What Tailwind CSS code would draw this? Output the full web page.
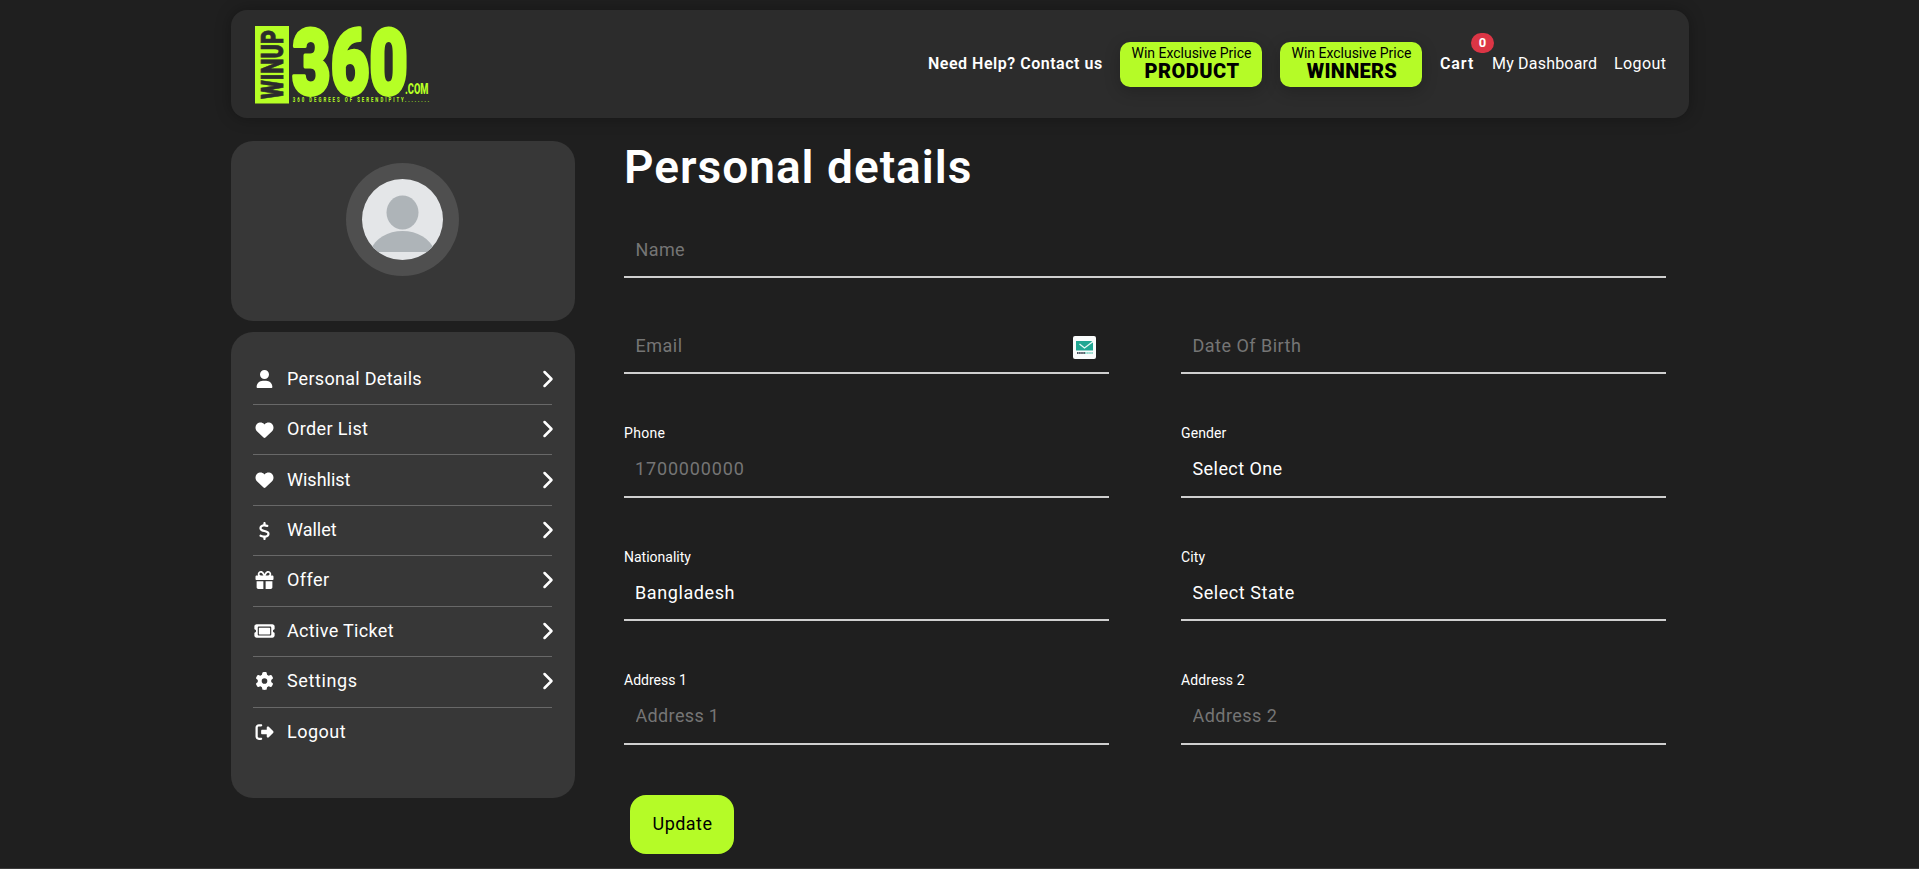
<!DOCTYPE html>
<html lang="en">
<head>
<meta charset="utf-8">
<title>Personal details</title>
<script src="https://cdn.jsdelivr.net/npm/@tailwindcss/browser@4"></script>
</head>
<body class="h-[869px] overflow-hidden bg-[#1f1f1f] font-['Roboto',sans-serif] text-white flex flex-col">
<div class="flex-1 w-[1458px] ml-[231px] pt-2.5">

  <header class="h-[108px] rounded-[16px] bg-[#2c2c2c] shadow-[0_0_16px_rgba(0,0,0,0.3)] pl-6 pr-[23px] flex items-center justify-between">
    <svg width="176" height="80" viewBox="0 0 176 80" class="shrink-0 overflow-visible">
      <rect x="0" y="2" width="34" height="77.500" fill="#b6ff25"/>
      <g font-family="Roboto, sans-serif" font-weight="900" fill="#b6ff25">
        <text transform="translate(27.500 75) rotate(-90)" font-size="31" textLength="69" lengthAdjust="spacingAndGlyphs" fill="#2c2c2c" stroke="#2c2c2c" stroke-width="0.700">WINUP</text>
        <text x="37" y="69.500" font-size="90" textLength="116" lengthAdjust="spacingAndGlyphs" stroke="#b6ff25" stroke-width="3.800" stroke-linejoin="round">360</text>
        <text x="150" y="70" font-size="14.500" textLength="23.500" lengthAdjust="spacingAndGlyphs">.COM</text>
        <g transform="scale(0.6 1)" font-size="7.200" font-weight="700">
          <text x="63" y="78.500" textLength="185" lengthAdjust="spacing">360 DEGREES OF SERENDIPITY</text>
          <text x="250" y="78.500" textLength="40" lengthAdjust="spacing">........</text>
        </g>
      </g>
    </svg>
    <nav class="flex items-center text-base leading-6">
      <a class="font-semibold tracking-[0.52px] w-[192px]">Need Help? Contact us</a>
      <a class="w-[142px] h-[45px] mr-[18px] rounded-[10px] bg-[#b5fb27] text-black shadow-[0_4px_16px_rgba(0,0,0,0.22)] flex flex-col items-center pt-[3px] pl-px">
        <span class="text-sm leading-4 tracking-[-0.02px] whitespace-nowrap">Win Exclusive Price</span>
        <span class="text-xl leading-5 font-black tracking-[0.5px] pl-px">PRODUCT</span>
      </a>
      <a class="w-[142px] h-[45px] mr-[18px] rounded-[10px] bg-[#b5fb27] text-black shadow-[0_4px_16px_rgba(0,0,0,0.22)] flex flex-col items-center pt-[3px] pl-px">
        <span class="text-sm leading-4 tracking-[-0.02px] whitespace-nowrap">Win Exclusive Price</span>
        <span class="text-xl leading-5 font-black tracking-[0.3px] pl-px">WINNERS</span>
      </a>
      <a class="relative w-[52px] font-semibold tracking-[0.9px]">Cart<span class="absolute left-[31px] top-[-19px] w-[23px] h-5 rounded-[10px] bg-[#dc3545] text-[13px] leading-5 font-bold text-center tracking-normal">0</span></a>
      <a class="w-[122px] tracking-[0.2px]">My Dashboard</a>
      <a class="w-[52px] tracking-[0.4px]">Logout</a>
    </nav>
  </header>

  <div class="flex mt-[23px]">
    <aside class="w-[344px] shrink-0 flex flex-col gap-[11px]">
      <div class="h-[180px] rounded-[22px] bg-[#373737] pt-[22px] pr-px flex justify-center">
        <div class="size-[113px] rounded-full bg-[#4f4f4f] p-4">
          <svg viewBox="0 0 81 81" class="size-[81px] rounded-full bg-[#e4e6e8]" fill="#aeb4b8">
            <ellipse cx="40.500" cy="33.500" rx="16" ry="17"/>
            <path d="M8 73V72C13 59 26 52 40.500 52S68 59 73 72V73Z"/>
          </svg>
        </div>
      </div>
      <nav class="h-[466px] rounded-[22px] bg-[#373737] px-[22px] pt-[22.5px] text-lg">
        <a class="flex items-center h-[50.45px] border-b border-[#686868] pb-px pr-[9px] w-[299px]"><svg class="w-[23px] h-[18px] mr-[11px] shrink-0" viewBox="0 0 448 512" fill="white"><path d="M224 256A128 128 0 1 0 224 0a128 128 0 1 0 0 256zm-45.700 48C79.800 304 0 383.800 0 482.300C0 498.700 13.300 512 29.700 512H418.300c16.400 0 29.700-13.300 29.700-29.700C448 383.800 368.200 304 269.700 304H178.300z"/></svg><span class="flex-1 whitespace-nowrap tracking-[0.3px]">Personal Details</span><svg class="w-3 h-[18px] shrink-0 -mr-[11px]" viewBox="0 0 12 18" fill="none" stroke="white" stroke-width="2.500" stroke-linecap="round" stroke-linejoin="round"><path d="M2.500 2l7 7-7 7"/></svg></a>
        <a class="flex items-center h-[50.45px] border-b border-[#686868] pb-px pr-[9px] w-[299px]"><svg class="w-[23px] h-[18px] mr-[11px] shrink-0 translate-y-px" viewBox="0 0 512 512" fill="white"><path d="M47.600 300.400L228.300 469.100c7.500 7 17.400 10.900 27.700 10.900s20.200-3.900 27.700-10.900L464.400 300.400c30.400-28.300 47.600-68 47.600-109.500v-5.800c0-69.900-50.500-129.500-119.400-141C347 36.500 300.600 51.400 268 84L256 96 244 84c-32.600-32.600-79-47.500-124.600-39.900C50.500 55.600 0 115.200 0 185.100v5.800c0 41.500 17.200 81.200 47.600 109.500z"/></svg><span class="flex-1 tracking-[0.35px]">Order List</span><svg class="w-3 h-[18px] shrink-0 -mr-[11px]" viewBox="0 0 12 18" fill="none" stroke="white" stroke-width="2.500" stroke-linecap="round" stroke-linejoin="round"><path d="M2.500 2l7 7-7 7"/></svg></a>
        <a class="flex items-center h-[50.45px] border-b border-[#686868] pb-px pr-[9px] w-[299px]"><svg class="w-[23px] h-[18px] mr-[11px] shrink-0" viewBox="0 0 512 512" fill="white"><path d="M47.600 300.400L228.300 469.100c7.500 7 17.400 10.900 27.700 10.900s20.200-3.900 27.700-10.900L464.400 300.400c30.400-28.300 47.600-68 47.600-109.500v-5.800c0-69.900-50.500-129.500-119.400-141C347 36.500 300.600 51.400 268 84L256 96 244 84c-32.600-32.600-79-47.500-124.600-39.900C50.500 55.600 0 115.200 0 185.100v5.800c0 41.500 17.200 81.200 47.600 109.500z"/></svg><span class="flex-1">Wishlist</span><svg class="w-3 h-[18px] shrink-0 -mr-[11px]" viewBox="0 0 12 18" fill="none" stroke="white" stroke-width="2.500" stroke-linecap="round" stroke-linejoin="round"><path d="M2.500 2l7 7-7 7"/></svg></a>
        <a class="flex items-center h-[50.45px] border-b border-[#686868] pb-px pr-[9px] w-[299px]"><svg class="w-[23px] h-[18px] mr-[11px] shrink-0 translate-y-px" viewBox="0 0 320 512" fill="white"><path d="M160 0c17.700 0 32 14.300 32 32V67.700c1.600 .2 3.100 .4 4.700 .7c.4 .1 .7 .1 1.100 .2l48 8.800c17.400 3.200 28.900 19.900 25.700 37.200s-19.900 28.900-37.200 25.700l-47.500-8.700c-31.300-4.600-58.900-1.500-78.300 6.200s-27.200 18.300-29 28.100c-2 10.700-.5 16.700 1.200 20.400c1.800 3.900 5.500 8.300 12.800 13.200c16.300 10.700 41.300 17.700 73.700 26.300l2.900 .8c28.600 7.600 63.600 16.800 89.600 33.800c14.200 9.300 27.600 21.900 35.900 39.500c8.500 17.900 10.300 37.900 6.400 59.200c-6.900 38-33.100 63.400-65.600 76.700c-13.700 5.600-28.600 9.200-44.400 11V480c0 17.700-14.300 32-32 32s-32-14.300-32-32V445.100c-.4-.1-.9-.1-1.300-.2l-.2 0 0 0c-24.400-3.800-64.500-14.300-91.500-26.300c-16.100-7.200-23.400-26.100-16.200-42.200s26.100-23.400 42.200-16.200c20.900 9.300 55.300 18.500 75.200 21.600c31.900 4.700 58.200 2 76-5.300c16.900-6.900 24.600-16.900 26.800-28.900c1.900-10.600 .4-16.700-1.300-20.400c-1.900-4-5.600-8.400-13-13.300c-16.400-10.700-41.500-17.700-74-26.300l-2.800-.7 0 0C119.400 279.300 84.400 270 58.400 253c-14.200-9.300-27.500-22-35.800-39.600c-8.400-17.900-10.100-37.900-6.100-59.200C23.700 116 52.300 91.200 84.800 78.300c13.300-5.300 27.900-8.900 43.200-11V32c0-17.700 14.300-32 32-32z"/></svg><span class="flex-1">Wallet</span><svg class="w-3 h-[18px] shrink-0 -mr-[11px]" viewBox="0 0 12 18" fill="none" stroke="white" stroke-width="2.500" stroke-linecap="round" stroke-linejoin="round"><path d="M2.500 2l7 7-7 7"/></svg></a>
        <a class="flex items-center h-[50.45px] border-b border-[#686868] pb-px pr-[9px] w-[299px]"><svg class="w-[23px] h-[18px] mr-[11px] shrink-0" viewBox="0 0 512 512" fill="white"><path d="M190.500 68.800L225.300 128H224 152c-22.100 0-40-17.900-40-40s17.900-40 40-40h2.200c14.900 0 28.800 7.900 36.300 20.800zM64 88c0 14.400 3.500 28 9.600 40H32c-17.700 0-32 14.300-32 32v64c0 17.700 14.300 32 32 32H480c17.700 0 32-14.300 32-32V160c0-17.700-14.300-32-32-32H438.400c6.100-12 9.600-25.600 9.600-40c0-48.600-39.400-88-88-88h-2.200c-31.900 0-61.500 16.900-77.700 44.400L256 85.500l-24.100-41C215.700 16.900 186.100 0 154.200 0H152C103.400 0 64 39.400 64 88zm336 0c0 22.100-17.900 40-40 40H288h-1.300l34.800-59.200C329.100 55.900 342.900 48 357.800 48H360c22.100 0 40 17.900 40 40zM32 288V464c0 26.500 21.500 48 48 48H224V288H32zM288 512H432c26.500 0 48-21.500 48-48V288H288V512z"/></svg><span class="flex-1 tracking-[0.45px]">Offer</span><svg class="w-3 h-[18px] shrink-0 -mr-[11px]" viewBox="0 0 12 18" fill="none" stroke="white" stroke-width="2.500" stroke-linecap="round" stroke-linejoin="round"><path d="M2.500 2l7 7-7 7"/></svg></a>
        <a class="flex items-center h-[50.45px] border-b border-[#686868] pb-px pr-[9px] w-[299px]"><svg class="w-[23px] h-[18px] mr-[11px] shrink-0" viewBox="0 0 576 512" fill="white"><path d="M64 64C28.700 64 0 92.700 0 128v64c0 8.800 7.400 15.700 15.700 18.600C34.500 217.100 48 235 48 256s-13.500 38.900-32.300 45.400C7.400 304.300 0 311.200 0 320v64c0 35.300 28.700 64 64 64H512c35.300 0 64-28.700 64-64V320c0-8.800-7.400-15.700-15.700-18.600C541.500 294.900 528 277 528 256s13.500-38.900 32.300-45.400c8.300-2.900 15.700-9.800 15.700-18.600V128c0-35.300-28.700-64-64-64H64zm64 112l0 160c0 8.800 7.200 16 16 16H432c8.800 0 16-7.200 16-16V176c0-8.800-7.200-16-16-16H144c-8.800 0-16 7.200-16 16zM96 160c0-17.700 14.300-32 32-32H448c17.700 0 32 14.300 32 32V352c0 17.700-14.300 32-32 32H128c-17.700 0-32-14.300-32-32V160z"/></svg><span class="flex-1 tracking-[0.33px]">Active Ticket</span><svg class="w-3 h-[18px] shrink-0 -mr-[11px]" viewBox="0 0 12 18" fill="none" stroke="white" stroke-width="2.500" stroke-linecap="round" stroke-linejoin="round"><path d="M2.500 2l7 7-7 7"/></svg></a>
        <a class="flex items-center h-[50.45px] border-b border-[#686868] pb-px pr-[9px] w-[299px]"><svg class="w-[23px] h-[18px] mr-[11px] shrink-0" viewBox="0 0 512 512" fill="white"><path d="M495.900 166.600c3.200 8.700 .5 18.400-6.400 24.600l-43.300 39.400c1.100 8.300 1.700 16.800 1.700 25.400s-.6 17.100-1.700 25.400l43.300 39.400c6.900 6.200 9.600 15.900 6.400 24.600c-4.400 11.900-9.700 23.300-15.800 34.300l-4.700 8.100c-6.600 11-14 21.400-22.100 31.200c-5.900 7.200-15.700 9.600-24.500 6.800l-55.700-17.700c-13.400 10.300-28.200 18.900-44 25.400l-12.500 57.100c-2 9.100-9 16.300-18.200 17.800c-13.800 2.300-28 3.500-42.500 3.500s-28.700-1.200-42.500-3.500c-9.200-1.500-16.200-8.700-18.200-17.800l-12.500-57.100c-15.800-6.500-30.600-15.100-44-25.400L83.100 425.900c-8.800 2.800-18.600 .3-24.500-6.800c-8.100-9.800-15.500-20.200-22.100-31.200l-4.700-8.100c-6.100-11-11.400-22.400-15.800-34.300c-3.200-8.700-.5-18.400 6.400-24.600l43.300-39.400C64.600 273.100 64 264.600 64 256s.6-17.100 1.700-25.400L22.400 191.200c-6.900-6.200-9.600-15.900-6.400-24.600c4.400-11.900 9.700-23.300 15.800-34.300l4.700-8.100c6.600-11 14-21.400 22.100-31.200c5.900-7.200 15.700-9.600 24.500-6.800l55.700 17.700c13.400-10.300 28.200-18.900 44-25.400l12.500-57.100c2-9.100 9-16.300 18.200-17.800C227.300 1.200 241.500 0 256 0s28.700 1.200 42.500 3.500c9.200 1.500 16.200 8.700 18.200 17.800l12.500 57.100c15.800 6.500 30.600 15.100 44 25.400l55.700-17.700c8.800-2.800 18.600-.3 24.500 6.800c8.100 9.800 15.500 20.200 22.100 31.200l4.700 8.100c6.100 11 11.400 22.400 15.800 34.300zM256 336a80 80 0 1 0 0-160 80 80 0 1 0 0 160z"/></svg><span class="flex-1 tracking-[0.6px]">Settings</span><svg class="w-3 h-[18px] shrink-0 -mr-[11px]" viewBox="0 0 12 18" fill="none" stroke="white" stroke-width="2.500" stroke-linecap="round" stroke-linejoin="round"><path d="M2.500 2l7 7-7 7"/></svg></a>
        <a class="flex items-center h-[50.45px] w-[299px] pb-px"><svg class="w-[23px] h-[18px] mr-[11px] shrink-0" viewBox="0 0 512 512" fill="white"><path d="M377.900 105.900L500.700 228.700c7.200 7.200 11.300 17.100 11.300 27.300s-4.100 20.100-11.300 27.300L377.900 406.100c-6.400 6.400-15 9.900-24 9.900c-18.700 0-33.900-15.200-33.900-33.900l0-62.100-128 0c-17.700 0-32-14.300-32-32l0-64c0-17.700 14.300-32 32-32l128 0 0-62.100c0-18.700 15.200-33.900 33.900-33.900c9 0 17.600 3.600 24 9.900zM160 96L96 96c-17.700 0-32 14.300-32 32l0 256c0 17.700 14.300 32 32 32l64 0c17.700 0 32 14.300 32 32s-14.300 32-32 32l-64 0c-53 0-96-43-96-96L0 128C0 75 43 32 96 32l64 0c17.700 0 32 14.300 32 32s-14.300 32-32 32z"/></svg><span class="flex-1 tracking-[0.5px]">Logout</span></a>
      </nav>
    </aside>

    <main class="ml-[49px] w-[1042px] shrink-0 text-lg">
      <h1 class="h-[80px] text-[46px] leading-[52px] font-semibold tracking-[1px]">Personal details</h1>
      <input placeholder="Name" class="block w-full h-[57px] px-[11.5px] pt-0.5 border-b-2 border-[#cfcfcf] bg-transparent placeholder-[#757575] tracking-[0.4px]">
      <div class="grid grid-cols-2 gap-x-[72px]">
        <div class="h-24 flex items-end">
          <div class="w-full h-[55px] pl-[11.5px] pr-[13px] border-b-2 border-[#cfcfcf] flex items-center">
            <input placeholder="Email" class="flex-1 bg-transparent placeholder-[#757575] tracking-[0.5px]">
            <svg width="23" height="23" viewBox="0 0 23 23" class="translate-y-[2px]"><rect width="23" height="23" rx="2" fill="#fafcfc"/><path d="M3 5H18.500L20 7V14.500H3Z" fill="#22a793"/><path d="M6.500 8l5 4L20 5.500" fill="none" stroke="#e8faf6" stroke-width="1.300"/><path d="M4 17h8" stroke="#4a5560" stroke-width="2" stroke-dasharray="1.600 .5"/><path d="M12 17h8" stroke="#8ed8ca" stroke-width="2" stroke-dasharray="1.600 .5"/></svg>
          </div>
        </div>
        <div class="h-24 flex items-end"><input placeholder="Date Of Birth" class="w-full h-[55px] px-[11.5px] border-b-2 border-[#cfcfcf] bg-transparent placeholder-[#757575] tracking-[0.48px]"></div>

        <div class="h-[124px] flex flex-col justify-end"><label class="text-sm leading-4 tracking-[0.3px]">Phone</label><input placeholder="1700000000" class="w-full h-[57px] px-[11px] border-b-2 border-[#cfcfcf] bg-transparent placeholder-[#757575] tracking-[0.85px]"></div>
        <div class="h-[124px] flex flex-col justify-end"><label class="text-sm leading-4 tracking-[0.1px]">Gender</label><input value="Select One" class="w-full h-[57px] px-[11.5px] border-b-2 border-[#cfcfcf] bg-transparent tracking-[0.43px]"></div>

        <div class="h-[123px] flex flex-col justify-end"><label class="text-sm leading-4">Nationality</label><input value="Bangladesh" class="w-full h-[56px] px-[11px] border-b-2 border-[#cfcfcf] bg-transparent tracking-[0.6px]"></div>
        <div class="h-[123px] flex flex-col justify-end"><label class="text-sm leading-4 tracking-[0.1px]">City</label><input value="Select State" class="w-full h-[56px] px-[11.5px] border-b-2 border-[#cfcfcf] bg-transparent tracking-[0.55px]"></div>

        <div class="h-[124px] flex flex-col justify-end"><label class="text-sm leading-4">Address 1</label><input placeholder="Address 1" class="w-full h-[57px] px-[11.5px] border-b-2 border-[#cfcfcf] bg-transparent placeholder-[#757575] tracking-[0.35px]"></div>
        <div class="h-[124px] flex flex-col justify-end"><label class="text-sm leading-4 tracking-[0.1px]">Address 2</label><input placeholder="Address 2" class="w-full h-[57px] px-[11.5px] border-b-2 border-[#cfcfcf] bg-transparent placeholder-[#757575] tracking-[0.45px]"></div>
      </div>
      <button class="mt-[50px] ml-1.5 w-[104px] h-[59px] rounded-[16px] bg-[#b5fb27] text-black tracking-[0.45px] pl-px pb-px">Update</button>
    </main>
  </div>
</div>
<footer class="h-px shrink-0 bg-[#3a3a3a]"></footer>
</body>
</html>
